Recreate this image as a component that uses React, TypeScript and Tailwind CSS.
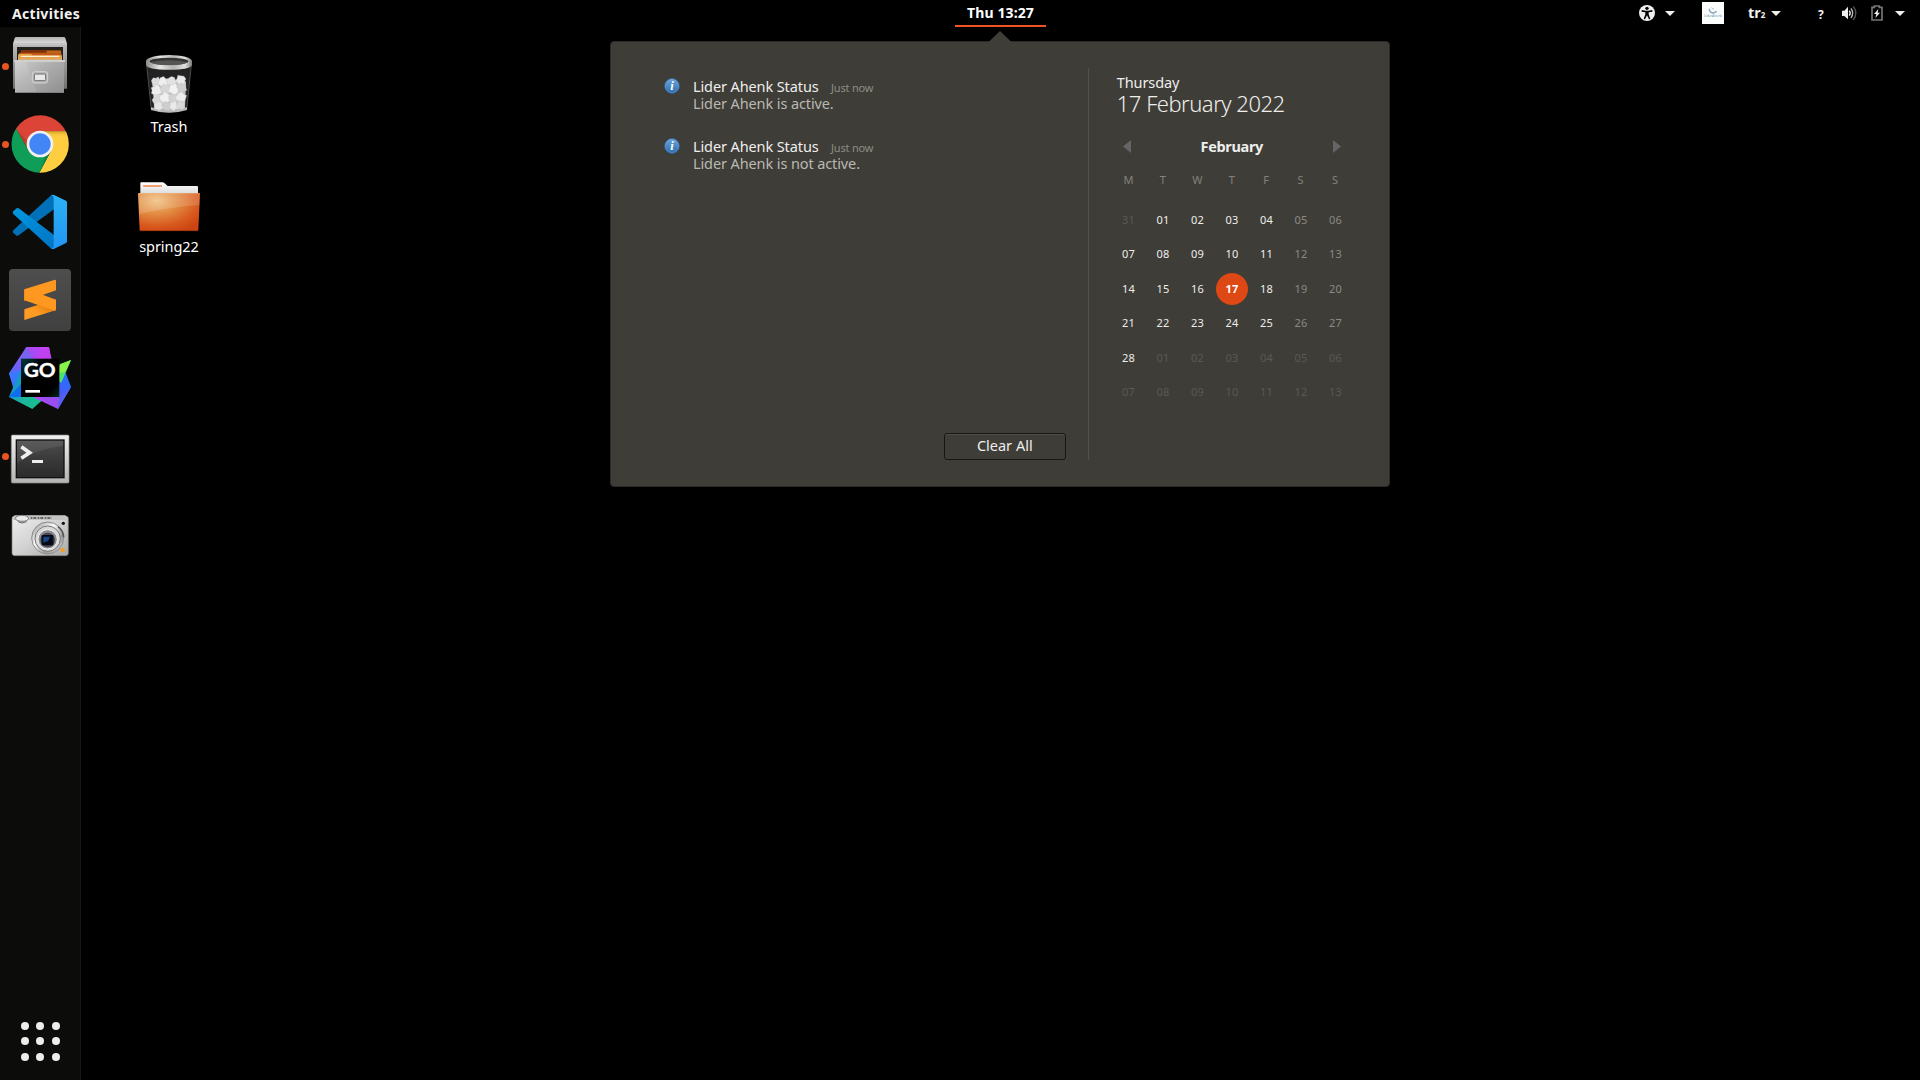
import React from "react";

type IconProps = { viewBox: string; children: React.ReactNode };

function DockSvg({ viewBox, children }: IconProps) {
  return (
    <svg viewBox={viewBox} className="block h-[78px] w-20">
      {children}
    </svg>
  );
}

function FilesIcon() {
  return (
    <DockSvg viewBox="0 81 240 234">
      <defs>
        <linearGradient id="cab-front" x1="0" y1="0" x2="1" y2="1">
          <stop offset="0" stopColor="#cfcfcf" />
          <stop offset="0.4" stopColor="#b0b0b0" />
          <stop offset="1" stopColor="#8e8e8e" />
        </linearGradient>
        <linearGradient id="cab-top" x1="0" y1="0" x2="0" y2="1">
          <stop offset="0" stopColor="#b2b2b2" />
          <stop offset="1" stopColor="#dedede" />
        </linearGradient>
        <linearGradient id="cab-body" x1="0" y1="0" x2="0" y2="1">
          <stop offset="0" stopColor="#bcbcbc" />
          <stop offset="1" stopColor="#6f6f6f" />
        </linearGradient>
      </defs>
      <path d="M39 131H201V266H39Z" fill="url(#cab-body)" />
      <path d="M49 111H191Q195 111 196 114L201 131H39L44 114Q45 111 49 111Z" fill="url(#cab-top)" />
      <path d="M39 131H201V133H39Z" fill="#ececec" />
      <path d="M51 141H189V182H51Z" fill="#25201c" />
      <path d="M63 150H181V160H63Z" fill="#7c3208" />
      <path d="M140 152H183V160H140Z" fill="#b96a18" />
      <path d="M58 158H184V168H58Z" fill="#c4571a" />
      <path d="M55 162H95V168H55Z" fill="#e9a040" />
      <path d="M54 166H186V181H54Z" fill="#e8a24a" />
      <path d="M62 167H178V171H62Z" fill="#f8eedd" />
      <path d="M54 176H186V181H54Z" fill="#d9ae78" />
      <path d="M45 180H192V279H45Z" fill="url(#cab-front)" />
      <path d="M42 180H195V186H42Z" fill="#cfcfcf" />
      <path d="M45 186H78L112 279H45Z" fill="#fff" opacity="0.1" />
      <path d="M45 277H192V279H45Z" fill="#777" />
      <rect x="97" y="215" width="46" height="34" rx="7" fill="#b7b7b7" stroke="#d2d2d2" strokeWidth="3" />
      <rect x="103" y="222" width="34" height="20" rx="3" fill="#e8e8e8" stroke="#6b6b6b" strokeWidth="3" />
    </DockSvg>
  );
}

function ChromeIcon() {
  return (
    <DockSvg viewBox="0 315 240 234">
      <defs>
        <clipPath id="chrome-disc">
          <circle cx="120.500" cy="432" r="86" />
        </clipPath>
        <linearGradient id="chrome-rs" x1="0" y1="0" x2="0" y2="1">
          <stop offset="0" stopColor="#b88a1b" stopOpacity="0.6" />
          <stop offset="1" stopColor="#ffcd40" stopOpacity="0" />
        </linearGradient>
      </defs>
      <g clipPath="url(#chrome-disc)">
        <path d="M30 340H210V394H120L86 452L48 386L30 380Z" fill="#db4437" />
        <path d="M120 394H215V525H114L154 451Z" fill="#ffcd40" />
        <path d="M30 370H40L86 452L120 470L154 451L116 522H30Z" fill="#0f9d58" />
        <path d="M120 394H206V412H150Z" fill="url(#chrome-rs)" />
        <path d="M48 386L86 452L84 425Z" fill="#8f2e22" opacity="0.35" />
        <path d="M154 451L116 522L138 465Z" fill="#0a6b3b" opacity="0.45" />
      </g>
      <circle cx="120" cy="432" r="40" fill="#f1f1f1" />
      <circle cx="120" cy="432" r="32" fill="#4285f4" />
    </DockSvg>
  );
}

function CodeIcon() {
  return (
    <DockSvg viewBox="0 9 240 234">
      <defs>
        <linearGradient id="code-r" x1="0" y1="0" x2="0" y2="1">
          <stop offset="0" stopColor="#2bb2f4" />
          <stop offset="1" stopColor="#2196f3" />
        </linearGradient>
        <linearGradient id="code-d" x1="0" y1="0" x2="1" y2="1">
          <stop offset="0" stopColor="#0098e0" />
          <stop offset="1" stopColor="#0073c4" />
        </linearGradient>
      </defs>
      <path d="M154 45Q158 43 162 46V88L56 166Q52 169 48 166L40 159Q37 155 40 151Z" fill="#0070b8" />
      <path d="M40 94L50 85Q54 83 58 86L162 165V204Q158 209 152 205L40 102Q37 98 40 94Z" fill="url(#code-d)" />
      <path d="M154 45Q158 43 164 46L198 62Q201 64 201 68V184Q201 188 198 189L163 206Q157 209 152 205Q161 205 161 198V53Q161 47 154 45Z" fill="url(#code-r)" />
    </DockSvg>
  );
}

function SublimeIcon() {
  return (
    <DockSvg viewBox="0 243 240 234">
      <defs>
        <linearGradient id="subl-bg" x1="0" y1="0" x2="0" y2="1">
          <stop offset="0" stopColor="#4e4e4e" />
          <stop offset="1" stopColor="#404040" />
        </linearGradient>
        <linearGradient id="subl-low" x1="0" y1="1" x2="1" y2="0">
          <stop offset="0.4" stopColor="#ff9a22" />
          <stop offset="0.75" stopColor="#e27d0c" />
        </linearGradient>
      </defs>
      <rect x="27" y="267" width="186" height="186" rx="12" fill="url(#subl-bg)" />
      <path d="M73 388L167 358V391L73 420Z" fill="url(#subl-low)" />
      <path d="M73 328L73 361L165 392Q168 391 168 388V359L130 345Z" fill="#ff9820" />
      <path d="M75 327L165 299Q168 299 168 302V331L130 344L73 362V331Q73 328 75 327Z" fill="#ff9820" />
    </DockSvg>
  );
}

function GoLandIcon() {
  return (
    <DockSvg viewBox="0 -3 240 234">
      <defs>
        <linearGradient id="go-a" x1="0" y1="1" x2="1" y2="0">
          <stop offset="0" stopColor="#2b7bff" />
          <stop offset="0.5" stopColor="#8a55f5" />
          <stop offset="1" stopColor="#d23df5" />
        </linearGradient>
        <linearGradient id="go-b" x1="0" y1="0" x2="1" y2="0.6">
          <stop offset="0" stopColor="#127bf5" />
          <stop offset="0.6" stopColor="#1fb59c" />
          <stop offset="1" stopColor="#16c28b" />
        </linearGradient>
        <linearGradient id="go-c" x1="1" y1="0" x2="0" y2="1">
          <stop offset="0" stopColor="#1677ff" />
          <stop offset="0.45" stopColor="#4a5cf8" />
          <stop offset="0.8" stopColor="#b845f5" />
        </linearGradient>
        <linearGradient id="go-k" x1="0" y1="0" x2="1" y2="1">
          <stop offset="0" stopColor="#00383f" />
          <stop offset="0.35" stopColor="#000" />
          <stop offset="0.8" stopColor="#000" />
          <stop offset="1" stopColor="#062a1a" />
        </linearGradient>
      </defs>
      <path d="M79 21H147L156 62L100 140L42 140L27 100Z" fill="url(#go-a)" />
      <path d="M27 100L64 90V150L40 145Z" fill="#3a78ff" />
      <path d="M79 21L98 56L64 60L50 72Z" fill="#7a62f0" />
      <path d="M98 56L147 21L152 56Z" fill="#c040ee" />
      <path d="M64 84L27 171L97 207L150 160L110 110Z" fill="url(#go-b)" />
      <path d="M27 171L64 130V171Z" fill="#0f6ef0" />
      <path d="M178 95L197 98L213 141L174 207L100 172L150 120Z" fill="url(#go-c)" />
      <path d="M130 172H178L174 207Z" fill="#9a4df0" />
      <path d="M178 171L213 141L174 207Z" fill="#5360f2" />
      <path d="M213 60L180 72L170 118L184 128Z" fill="#4be36b" />
      <path d="M213 60L178 74V98L196 96Z" fill="#8cf04a" />
      <rect x="63" y="56" width="115" height="115" fill="url(#go-k)" />
      <text x="71" y="111" textLength="96" lengthAdjust="spacingAndGlyphs" fontSize="55" fontWeight="700" fill="#fff" stroke="#fff" strokeWidth="1" fontFamily="Lato, sans-serif">GO</text>
      <rect x="76" y="150" width="44" height="8" fill="#fff" />
    </DockSvg>
  );
}

function TerminalIcon() {
  return (
    <DockSvg viewBox="0 231 240 234">
      <defs>
        <linearGradient id="term-f" x1="0" y1="0" x2="0" y2="1">
          <stop offset="0" stopColor="#f0f0f0" />
          <stop offset="1" stopColor="#b4b4b4" />
        </linearGradient>
        <linearGradient id="term-s" x1="0" y1="0" x2="0" y2="1">
          <stop offset="0" stopColor="#4c4e4c" />
          <stop offset="0.5" stopColor="#3a3a3a" />
          <stop offset="1" stopColor="#2b2b2b" />
        </linearGradient>
      </defs>
      <rect x="34" y="285" width="173" height="144" rx="4" fill="url(#term-f)" stroke="#8c8c8c" strokeWidth="2" />
      <rect x="47" y="298" width="147" height="117" fill="#111" />
      <rect x="51" y="302" width="139" height="109" fill="url(#term-s)" />
      <path d="M51 302H190V318Q110 325 51 370Z" fill="#fff" opacity="0.08" />
      <path d="M64 320L89 338L64 355" fill="none" stroke="#eee" strokeWidth="11" />
      <rect x="96" y="360" width="33" height="9" fill="#eee" />
    </DockSvg>
  );
}

function CameraIcon() {
  return (
    <DockSvg viewBox="0 465 240 234">
      <defs>
        <linearGradient id="cam-b" x1="0" y1="0" x2="1" y2="1">
          <stop offset="0" stopColor="#efefef" />
          <stop offset="0.5" stopColor="#d2d2d2" />
          <stop offset="1" stopColor="#a9a9a9" />
        </linearGradient>
        <linearGradient id="cam-r" x1="0" y1="0" x2="1" y2="1">
          <stop offset="0" stopColor="#8a8a8a" />
          <stop offset="0.4" stopColor="#fafafa" />
          <stop offset="0.7" stopColor="#9a9a9a" />
          <stop offset="1" stopColor="#e8e8e8" />
        </linearGradient>
      </defs>
      <rect x="36" y="528" width="169" height="119" rx="8" fill="url(#cam-b)" stroke="#7d7d7d" strokeWidth="2" />
      <path d="M44 526H196L202 540H38Z" fill="#c4c4c4" />
      <path d="M92 534H156" stroke="#4a4a4a" strokeWidth="5" strokeDasharray="5 3 9 4" />
      <ellipse cx="66" cy="535" rx="20" ry="9" fill="#e9e9e9" stroke="#777" strokeWidth="3" />
      <path d="M54 545L66 549L80 545" stroke="#666" strokeWidth="3" fill="none" />
      <circle cx="143" cy="594" r="48" fill="url(#cam-r)" stroke="#8d8d8d" strokeWidth="3" />
      <circle cx="143" cy="596" r="38" fill="#d9d9d9" stroke="#7b7b7b" strokeWidth="3" />
      <circle cx="143" cy="598" r="29" fill="#8a8c90" stroke="#f2f2f2" strokeWidth="3" />
      <circle cx="143" cy="600" r="22" fill="#44464a" />
      <rect x="125" y="585" width="35" height="31" rx="3" fill="#060b18" />
      <path d="M130 590H150L145 602L130 608Z" fill="#1b4585" />
      <path d="M174 560Q190 572 191 592" stroke="#555" strokeWidth="5" fill="none" />
      <circle cx="190" cy="550" r="5" fill="#111" />
      <rect x="182" y="624" width="12" height="12" fill="#f0a02a" />
    </DockSvg>
  );
}

const dock: { icon: React.ReactNode; running: boolean }[] = [
  { icon: <FilesIcon />, running: true },
  { icon: <ChromeIcon />, running: true },
  { icon: <CodeIcon />, running: false },
  { icon: <SublimeIcon />, running: false },
  { icon: <GoLandIcon />, running: false },
  { icon: <TerminalIcon />, running: true },
  { icon: <CameraIcon />, running: false },
];

function Dock() {
  return (
    <nav className="flex w-[81px] flex-col justify-between border-r border-[#161614] bg-[#0c0c0a]">
      <div className="flex flex-col">
        {dock.map((d, i) => (
          <div key={i} className="relative h-[78px]">
            {d.icon}
            {d.running && <span className="absolute top-[35.500px] left-[2px] size-[7px] rounded-full bg-[#e95420]" />}
          </div>
        ))}
      </div>
      <div className="mb-[19.500px] ml-[20.500px] grid w-[39px] grid-cols-[repeat(3,8px)] gap-[7.500px]">
        {Array.from({ length: 9 }, (_, i) => (
          <span key={i} className="size-2 rounded-full bg-[#eeeeec]" />
        ))}
      </div>
    </nav>
  );
}

const crumple: [number, number, number, string][] = [
  [468, 246, 14, "#dcdcdc"], [490, 246, 15, "#efefef"], [514, 244, 14, "#e2e2e2"], [543, 240, 14, "#e9e9e9"],
  [470, 272, 16, "#ededed"], [496, 268, 15, "#d6d6d6"], [522, 268, 16, "#f2f2f2"], [545, 264, 14, "#cfcfcf"],
  [472, 298, 15, "#d9d9d9"], [495, 294, 16, "#f0f0f0"], [520, 296, 15, "#d2d2d2"], [543, 292, 15, "#ececec"],
  [476, 318, 13, "#e6e6e6"], [500, 318, 13, "#cecece"], [522, 318, 13, "#e9e9e9"], [542, 316, 13, "#d8d8d8"],
];

function TrashIcon() {
  return (
    <svg viewBox="429 153 156 192" className="block h-16 w-[52px]">
      <defs>
        <linearGradient id="rim" x1="0" y1="0" x2="1" y2="0">
          <stop offset="0" stopColor="#8a8a88" />
          <stop offset="0.3" stopColor="#e6e6e4" />
          <stop offset="0.6" stopColor="#b5b5b2" />
          <stop offset="0.85" stopColor="#e2e2e0" />
          <stop offset="1" stopColor="#7c7c7a" />
        </linearGradient>
      </defs>
      <path d="M440 195H574L560 330Q507 347 454 330Z" fill="#222322" />
      <path d="M440 195L454 330" stroke="#4a4b4a" strokeWidth="3" />
      <path d="M574 195L560 330" stroke="#4a4b4a" strokeWidth="3" />
      <path d="M453 322Q507 336 561 322V330Q507 347 453 330Z" fill="#b9bbb8" />
      <path d="M460 244L480 236L500 244L516 234L530 240L545 232L558 246L555 325Q507 336 462 325Z" fill="#c4c5c3" />
      {crumple.map(([x, y, r, c], i) => (
        <path
          key={i}
          transform={`translate(${x} ${y}) scale(${r / 10}) rotate(${i * 37})`}
          d="M-10 -3L-6 -9L0 -8L5 -11L8 -5L11 1L7 5L6 10L-1 9L-7 10L-8 4Z"
          fill={c}
          stroke="#bcbcba"
          strokeWidth="0.600"
        />
      ))}
      <path d="M438 182V194Q440 209 507 209Q574 209 576 194V182Z" fill="url(#rim)" />
      <ellipse cx="507" cy="183" rx="69" ry="18" fill="url(#rim)" />
      <ellipse cx="507" cy="184" rx="58" ry="11" fill="#343533" />
      <path d="M450 187Q507 174 564 187Q550 196 507 196Q464 196 450 187Z" fill="#555653" />
    </svg>
  );
}

function FolderIcon() {
  return (
    <svg viewBox="408 0 198 162" className="-mb-px block h-[54px] w-[66px] -translate-y-0.5">
      <defs>
        <radialGradient id="fold" cx="0.3" cy="0.2" r="0.9">
          <stop offset="0" stopColor="#f0c080" />
          <stop offset="0.35" stopColor="#e39148" />
          <stop offset="0.75" stopColor="#d8591d" />
          <stop offset="1" stopColor="#cc4413" />
        </radialGradient>
        <linearGradient id="paper" x1="0" y1="0" x2="0" y2="1">
          <stop offset="0" stopColor="#fff" />
          <stop offset="1" stopColor="#d8d8d8" />
        </linearGradient>
      </defs>
      <path d="M421 9Q421 7 424 7H488Q491 7 493 9L503 18H591Q594 18 594 21V45H421Z" fill="url(#paper)" />
      <rect x="429" y="15" width="57" height="6" rx="2" fill="#f0a070" />
      <path d="M416 39H598Q600 39 600 42L595 150Q595 153 592 153H422Q419 153 419 150L414 42Q414 39 416 39Z" fill="url(#fold)" />
      <path d="M415 40H599L598 75Q500 82 418 102Z" fill="#fff" opacity="0.15" />
      <path d="M416 41H598" stroke="#f6c79a" strokeWidth="2" opacity="0.7" />
      <path d="M420 152H594" stroke="#8e2e0c" strokeWidth="2" />
    </svg>
  );
}

function DesktopItem({ icon, label }: { icon: React.ReactNode; label: string }) {
  return (
    <div className="flex h-[120px] w-28 flex-col items-center">
      <div className="flex h-[66px] items-end">{icon}</div>
      <span className="text-[14.500px] leading-[22px] tracking-[-0.050px] text-white">{label}</span>
    </div>
  );
}

function InfoIcon() {
  return (
    <svg viewBox="0 0 16 16" className="block size-4">
      <defs>
        <linearGradient id="info" x1="0" y1="0" x2="0" y2="1">
          <stop offset="0" stopColor="#6fa5d8" />
          <stop offset="1" stopColor="#2b6cab" />
        </linearGradient>
      </defs>
      <circle cx="8" cy="8" r="7.400" fill="url(#info)" stroke="#2a639c" strokeWidth="0.800" />
      <circle cx="8" cy="8" r="6.500" fill="none" stroke="#8db8e0" strokeWidth="0.500" opacity="0.6" />
      <text x="8" y="12.300" textAnchor="middle" fontFamily="'Liberation Serif', serif" fontStyle="italic" fontWeight="700" fontSize="12.500" fill="#fff">i</text>
    </svg>
  );
}

function Notification({ body }: { body: string }) {
  return (
    <div className="flex h-[60px] gap-[13px]">
      <InfoIcon />
      <div className="flex flex-col text-[14.500px] leading-[17px]">
        <div className="flex items-baseline">
          <span className="w-[138px] tracking-[-0.110px] text-[#eeeeec]">Lider Ahenk Status</span>
          <span className="text-[11px] tracking-[-0.200px] text-[#8d8d85]">Just now</span>
        </div>
        <span className="-mt-px tracking-[-0.110px] text-[#b9b9b2]">{body}</span>
      </div>
    </div>
  );
}

const weeks = [
  ["31", "01", "02", "03", "04", "05", "06"],
  ["07", "08", "09", "10", "11", "12", "13"],
  ["14", "15", "16", "17", "18", "19", "20"],
  ["21", "22", "23", "24", "25", "26", "27"],
  ["28", "01", "02", "03", "04", "05", "06"],
  ["07", "08", "09", "10", "11", "12", "13"],
];

function dayClass(w: number, d: number) {
  const other = (w === 0 && d === 0) || (w === 4 && d > 0) || w === 5;
  if (w === 2 && d === 3) return "bg-[#dd4814] font-bold text-white";
  if (other) return "text-[#5a5954]";
  return d > 4 ? "text-[#8b8a84]" : "text-[#eeeeec]";
}

function Calendar() {
  return (
    <section className="flex w-[301px] flex-col pt-[31px] pl-[28px]">
      <div className="text-[14.500px] leading-[18px] tracking-[-0.100px] text-[#eeeeec]">Thursday</div>
      <div className="h-[25px] text-[22px] leading-[24px] font-light tracking-[-0.500px] whitespace-nowrap text-[#eeeeec]">17 February 2022</div>
      <div className="mt-[18px] flex h-[24px] w-[218px] items-center justify-between pl-[6px]">
        <svg viewBox="0 0 8 13" className="h-[13px] w-2"><path d="M8 0V13L0 6.500Z" fill="#656565" /></svg>
        <span className="text-[14.500px] leading-[24px] font-bold tracking-[-0.350px] text-[#eeeeec]">February</span>
        <svg viewBox="0 0 8 13" className="mr-[-6px] h-[13px] w-2"><path d="M0 0V13L8 6.500Z" fill="#656565" /></svg>
      </div>
      <div className="mt-[13px] -ml-[5.500px] grid h-[33px] w-[241px] grid-cols-7 text-center text-[11px] leading-[18px] text-[#83827b]">
        {["M", "T", "W", "T", "F", "S", "S"].map((d, i) => (
          <span key={i}>{d}</span>
        ))}
      </div>
      <div className="-ml-[5.500px] grid w-[241.500px] grid-cols-7 text-[11px] tracking-[0.300px]">
        {weeks.map((week, w) =>
          week.map((day, d) => (
            <span key={`${w}-${d}`} className="flex h-[34.500px] items-start justify-center">
              <span className={`flex size-8 items-center justify-center rounded-full ${dayClass(w, d)}`}>{day}</span>
            </span>
          ))
        )}
      </div>
    </section>
  );
}

function Popup() {
  return (
    <div className="absolute top-[41px] left-[610px] flex h-[446px] w-[780px] rounded-[4px] border border-[#2b2a26] bg-[#3f3d38]">
      <svg viewBox="0 0 26 13" className="absolute -top-[12px] left-[376px] h-[13px] w-[26px]">
        <path d="M0.500 13L13 1L25.500 13Z" fill="#3f3d38" />
      </svg>
      <section className="my-[26px] flex w-[479px] flex-col justify-between border-r border-[#53514c] pl-[53px]">
        <div className="pt-[10px]">
          <Notification body="Lider Ahenk is active." />
          <Notification body="Lider Ahenk is not active." />
        </div>
        <button className="mr-[22px] h-[27px] w-[122px] self-end rounded-[3px] border border-[#161613] pb-[2px] text-[14.500px] leading-[23px] text-[#eeeeec] shadow-[inset_0_1px_0_#504f45]">Clear All</button>
      </section>
      <Calendar />
    </div>
  );
}

function Caret() {
  return <svg viewBox="0 0 10 5" className="h-[5px] w-[10px]"><path d="M0 0H10L5 5Z" fill="#eeeeec" /></svg>;
}

function TopBar() {
  return (
    <header className="relative flex h-[27px] shrink-0 items-center justify-between text-[#f2f2f0]">
      <span className="ml-3 text-[14px] leading-[27px] font-bold tracking-[0.300px]">Activities</span>
      <div className="absolute top-0 left-[955px] flex h-[27px] w-[91px] justify-center border-b-2 border-[#f05423] text-[14px] leading-[26px] font-bold tracking-[0.100px] text-white">
        Thu 13:27
      </div>
      <div className="-mt-px flex h-[26px] items-center pr-[15px]">
        <svg viewBox="0 0 48 48" className="h-4 w-4">
          <circle cx="24" cy="24" r="24" fill="#eeeeec" />
          <circle cx="24" cy="10" r="5" fill="#000" />
          <path d="M8 15L20 17H28L40 15V20L29 22V28L34 42L30 43L24 31L18 43L14 42L19 28V22L8 20Z" fill="#000" />
        </svg>
        <span className="ml-[10px] flex"><Caret /></span>
        <svg viewBox="0 0 66 66" className="ml-[27px] h-[22px] w-[22px]">
          <rect width="66" height="66" fill="#fbfcfc" />
          <path d="M22 20Q22 32 34 33L44 28" fill="none" stroke="#7fa4b8" strokeWidth="4" />
          <path d="M28 17L36 22" stroke="#a9c3d0" strokeWidth="3" />
          <text x="6" y="46" textLength="54" lengthAdjust="spacingAndGlyphs" fontSize="12" fill="#4f90a8" fontFamily="'Open Sans', sans-serif">LiderAhenk</text>
        </svg>
        <span className="ml-[24px] flex w-[19px] items-baseline text-[14.500px] leading-[26px] font-bold">
          tr<span className="text-[8px]">2</span>
        </span>
        <span className="ml-[4px] flex"><Caret /></span>
        <span className="ml-[37px] w-[9px] pt-[3px] text-[12px] leading-[23px] font-bold">?</span>
        <svg viewBox="660 15 48 48" className="ml-[14px] h-4 w-4">
          <path d="M663 32H670L681 20V58L670 48H663Z" fill="#eeeeec" />
          <path d="M685 32Q690 39 685 47" stroke="#eeeeec" strokeWidth="4" fill="none" />
          <path d="M690 25Q700 39 690 54" stroke="#bbb" strokeWidth="4" fill="none" />
          <path d="M697 19Q712 39 697 60" stroke="#555" strokeWidth="4" fill="none" />
        </svg>
        <svg viewBox="750 15 42 48" className="ml-[13px] h-4 w-[14px]">
          <path d="M756 22H763V18H778V22H786V60H756Z" fill="none" stroke="#777" strokeWidth="5" />
          <path d="M775 27L762 42H769L766 54L780 38H773Z" fill="#eeeeec" />
        </svg>
        <span className="ml-[11px] flex"><Caret /></span>
      </div>
    </header>
  );
}

export default function App() {
  return (
    <div className="relative flex h-[1080px] w-[1920px] flex-col overflow-hidden bg-black font-['Noto_Sans',sans-serif]">
      <TopBar />
      <div className="flex flex-1">
        <Dock />
        <main className="flex flex-col pt-[22px] pl-8">
          <DesktopItem icon={<TrashIcon />} label="Trash" />
          <DesktopItem icon={<FolderIcon />} label="spring22" />
        </main>
      </div>
      <Popup />
    </div>
  );
}
